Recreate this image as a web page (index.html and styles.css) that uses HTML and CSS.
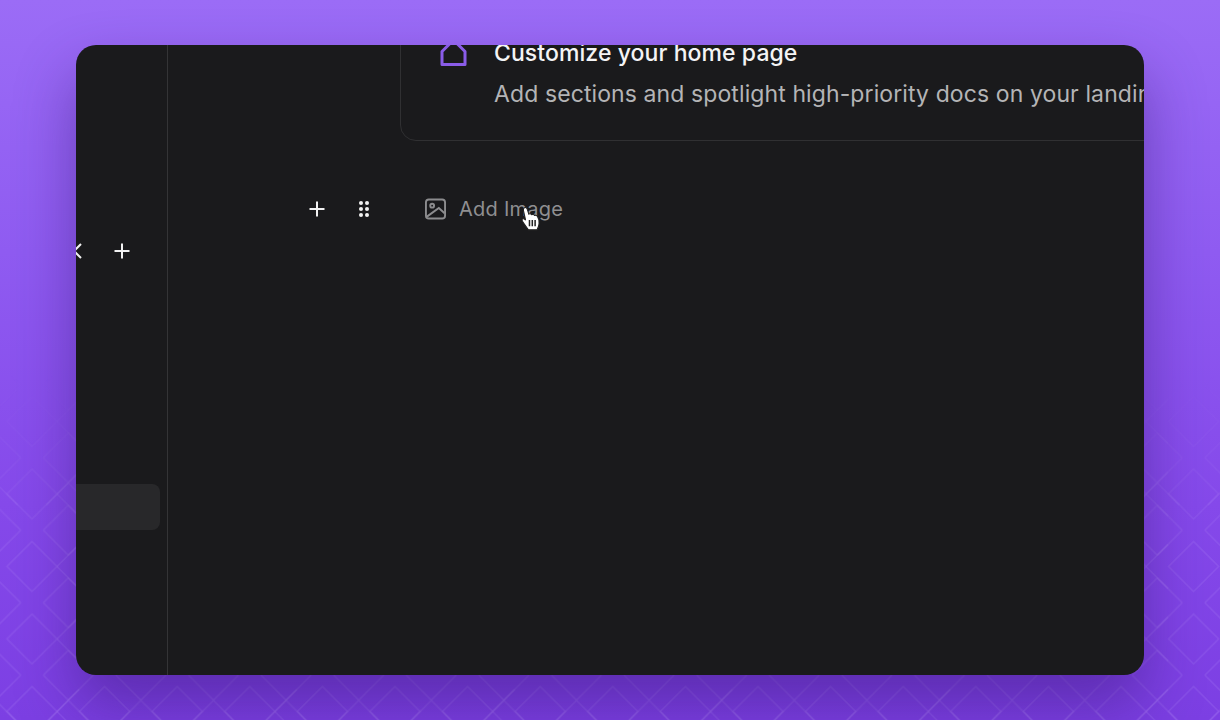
FILE: index.html
```html
<!DOCTYPE html>
<html lang="en">
<head>
    <meta charset="UTF-8">
    <title>Add Image</title>
    <link rel="stylesheet" href="styles.css">
</head>
<body>
    <svg class="pattern" width="1220" height="720" aria-hidden="true">
        <defs>
            <pattern id="diamonds" x="-4.3" y="457.7" width="72.6" height="72.5" patternUnits="userSpaceOnUse">
                <path d="M36.3 11.3L61.3 36.3L36.3 61.3L11.3 36.3Z" />
                <path d="M0 25L25 0M47.6 0L72.6 25M72.6 47.6L47.6 72.6M25 72.6L0 47.6" />
            </pattern>
            <pattern id="crossDown" x="-40.6" y="453" width="72.6" height="217.5" patternUnits="userSpaceOnUse">
                <path d="M36.3 30L14.3 52M36.3 30L58.3 52" />
            </pattern>
            <pattern id="crossRight" x="27" y="457.75" width="217.8" height="72.5" patternUnits="userSpaceOnUse">
                <path d="M30 36.25L52 14.25M30 36.25L52 58.25" />
            </pattern>
            <linearGradient id="fade" x1="0" y1="0" x2="0" y2="1">
                <stop offset="0.52" stop-color="#fff" stop-opacity="0" />
                <stop offset="0.75" stop-color="#fff" stop-opacity="1" />
            </linearGradient>
            <mask id="fadeMask">
                <rect width="1220" height="720" fill="url(#fade)" />
            </mask>
        </defs>
        <g mask="url(#fadeMask)">
            <rect width="1220" height="720" fill="url(#diamonds)" />
            <rect width="1220" height="720" fill="url(#crossDown)" />
            <rect width="1220" height="720" fill="url(#crossRight)" />
        </g>
    </svg>

    <div class="window">
        <div class="sidebar">
            <div class="sidebar-head">
                <svg class="chevron" width="9" height="18" viewBox="0 0 9 18"><path d="M8 2L1 9L8 16" /></svg>
                <svg class="plus" width="16" height="16" viewBox="0 0 16 16"><path d="M8 0.5V15.5M0.5 8H15.5" /></svg>
            </div>
            <div class="sidebar-item"></div>
        </div>

        <div class="main">
            <div class="callout">
                <svg class="home-icon" width="28" height="34" viewBox="0 0 28 34"><path d="M2 12.5L13.5 1L25 12.5V25.5H2Z" /></svg>
                <div class="callout-text">
                    <div class="callout-title">Customize your home page</div>
                    <div class="callout-desc">Add sections and spotlight high-priority docs on your landing page</div>
                </div>
            </div>

            <div class="block-row">
                <svg class="plus" width="16" height="16" viewBox="0 0 16 16"><path d="M8 0.5V15.5M0.5 8H15.5" /></svg>
                <svg class="grip" width="10" height="16" viewBox="0 0 10 16">
                    <circle cx="2" cy="2" r="2" /><circle cx="8" cy="2" r="2" />
                    <circle cx="2" cy="8" r="2" /><circle cx="8" cy="8" r="2" />
                    <circle cx="2" cy="14" r="2" /><circle cx="8" cy="14" r="2" />
                </svg>
                <div class="add-image">
                    <svg class="image-icon" width="21" height="22" viewBox="0 0 22 22">
                        <rect x="1" y="1" width="20" height="20" rx="3" />
                        <circle cx="7.5" cy="7.5" r="2" />
                        <path d="M2 19L14.5 10L20.5 15.5" />
                    </svg>
                    <span>Add Image</span>
                    <svg class="cursor" width="22" height="26" viewBox="0 0 20 24">
                        <path class="cursor-hand" d="M4 1.5C5.2 1 6.2 1.6 6.6 3L8 7.5C8.8 7 10 7.2 10.6 8C11.5 7.5 12.8 7.8 13.3 8.7C14.3 8.3 15.6 8.7 16 9.8C17 11 17.6 14 17.4 16.5C17.2 19 16.4 20.5 15.6 22H7.6C6.4 20.4 4.8 18.2 3.2 15.8C2.2 14.4 1.4 13.2 1.8 12.3C2.4 11.3 3.8 11.6 5 13L3 4C2.8 3 3.2 2 4 1.5Z" />
                        <path class="cursor-lines" d="M8.6 13V18.6M11.2 13V18.6M13.8 13V18.6" />
                    </svg>
                </div>
            </div>
        </div>
    </div>
</body>
</html>
```

FILE: styles.css
```css
* {
    box-sizing: border-box;
}
body {
    margin: 0;
    height: 720px;
    padding: 45px 76px;
    overflow: hidden;
    font-family: 'Inter', 'Liberation Sans', sans-serif;
    background: linear-gradient(to bottom, #9b6cf6, #8f5bf1 35%, #8549ea 70%, #7c3fe3);
}
.pattern {
    position: absolute;
    top: 0;
    left: 0;
}
.pattern path {
    fill: none;
    stroke: #a97df5;
    stroke-opacity: 0.25;
    stroke-width: 1.5;
}
.window {
    position: relative;
    display: flex;
    height: 630px;
    background-color: #1a1a1c;
    border-radius: 20px;
    overflow: hidden;
    box-shadow: 0 30px 60px rgba(50, 20, 110, 0.45);
}
.sidebar {
    width: 92px;
    flex-shrink: 0;
    border-right: 1px solid #343436;
}
.sidebar-head {
    display: flex;
    align-items: center;
    gap: 32px;
    margin: 197px 0 0 -3px;
}
.sidebar-item {
    width: 84px;
    height: 46px;
    margin-top: 224px;
    background-color: #28282a;
    border-radius: 0 8px 8px 0;
}
.plus path {
    fill: none;
    stroke: #f2f2f2;
    stroke-width: 2;
}
.chevron path {
    fill: none;
    stroke: #f2f2f2;
    stroke-width: 2;
}
.main {
    flex: 1;
    min-width: 0;
}
.callout {
    display: flex;
    width: 900px;
    height: 136px;
    margin: -40px 0 0 232px;
    padding: 27px 0 0 39px;
    border: 1px solid #303032;
    border-radius: 16px;
    white-space: nowrap;
}
.home-icon {
    flex-shrink: 0;
    margin: 6px 26px 0 0;
}
.home-icon path {
    fill: none;
    stroke: #8a5ce8;
    stroke-width: 3;
    stroke-linejoin: round;
}
.callout-title {
    font-size: 23px;
    font-weight: 500;
    line-height: 41px;
    letter-spacing: 0.08px;
    color: #f4f4f5;
}
.callout-desc {
    font-size: 23px;
    line-height: 40px;
    letter-spacing: 0.1px;
    color: #b4b4b6;
}
.block-row {
    display: flex;
    align-items: center;
    height: 24px;
    margin: 56px 0 0 141px;
}
.grip {
    margin-left: 34px;
}
.grip circle {
    fill: #f2f2f2;
}
.add-image {
    position: relative;
    display: flex;
    align-items: center;
    gap: 13px;
    margin-left: 56px;
    font-size: 20px;
    letter-spacing: 0.25px;
    color: #8f8f91;
}
.image-icon rect,
.image-icon circle,
.image-icon path {
    fill: none;
    stroke: #8c8c8e;
    stroke-width: 2;
}
.cursor {
    position: absolute;
    left: 95px;
    top: 9px;
}
.cursor-hand {
    fill: #fff;
    stroke: #222;
    stroke-width: 1;
}
.cursor-lines {
    fill: none;
    stroke: #222;
    stroke-width: 1.4;
}
```
